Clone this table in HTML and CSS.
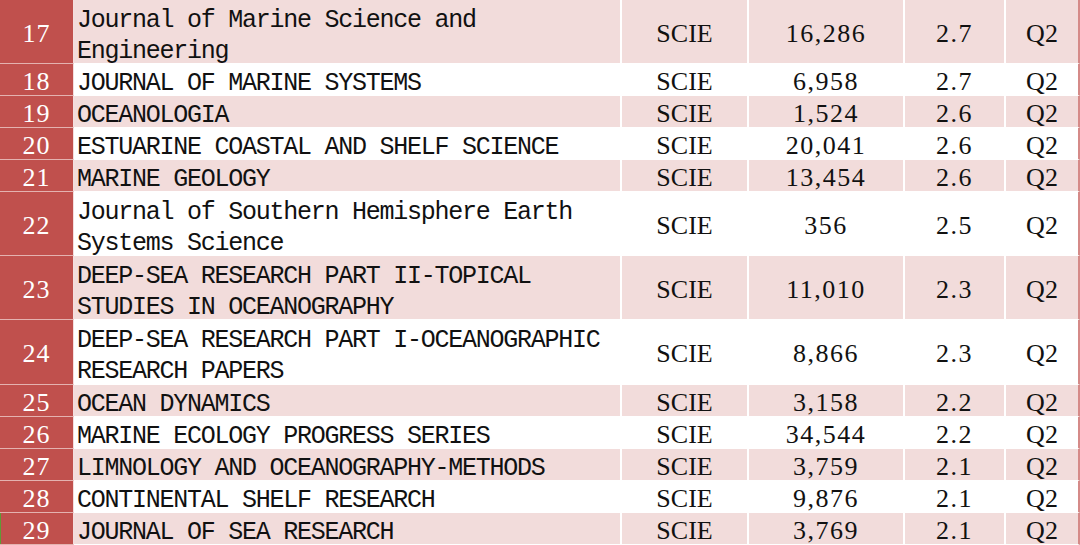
FILE: index.html
```html
<!DOCTYPE html>
<html>
<head>
<meta charset="utf-8">
<link rel="stylesheet" href="styles.css">
</head>
<body>
<div class="table">
  <div class="row pink tall first"><div class="no">17</div><div class="name">Journal of Marine Science and Engineering</div><div class="c idx">SCIE</div><div class="c num">16,286</div><div class="c if">2.7</div><div class="c q">Q2</div></div>
  <div class="row"><div class="no">18</div><div class="name">JOURNAL OF MARINE SYSTEMS</div><div class="c idx">SCIE</div><div class="c num">6,958</div><div class="c if">2.7</div><div class="c q">Q2</div></div>
  <div class="row pink"><div class="no">19</div><div class="name">OCEANOLOGIA</div><div class="c idx">SCIE</div><div class="c num">1,524</div><div class="c if">2.6</div><div class="c q">Q2</div></div>
  <div class="row"><div class="no">20</div><div class="name">ESTUARINE COASTAL AND SHELF SCIENCE</div><div class="c idx">SCIE</div><div class="c num">20,041</div><div class="c if">2.6</div><div class="c q">Q2</div></div>
  <div class="row pink"><div class="no">21</div><div class="name">MARINE GEOLOGY</div><div class="c idx">SCIE</div><div class="c num">13,454</div><div class="c if">2.6</div><div class="c q">Q2</div></div>
  <div class="row tall"><div class="no">22</div><div class="name">Journal of Southern Hemisphere Earth Systems Science</div><div class="c idx">SCIE</div><div class="c num">356</div><div class="c if">2.5</div><div class="c q">Q2</div></div>
  <div class="row pink tall"><div class="no">23</div><div class="name">DEEP-SEA RESEARCH PART II-TOPICAL STUDIES IN OCEANOGRAPHY</div><div class="c idx">SCIE</div><div class="c num">11,010</div><div class="c if">2.3</div><div class="c q">Q2</div></div>
  <div class="row tall extra"><div class="no">24</div><div class="name">DEEP-SEA RESEARCH PART I-OCEANOGRAPHIC RESEARCH PAPERS</div><div class="c idx">SCIE</div><div class="c num">8,866</div><div class="c if">2.3</div><div class="c q">Q2</div></div>
  <div class="row pink"><div class="no">25</div><div class="name">OCEAN DYNAMICS</div><div class="c idx">SCIE</div><div class="c num">3,158</div><div class="c if">2.2</div><div class="c q">Q2</div></div>
  <div class="row"><div class="no">26</div><div class="name">MARINE ECOLOGY PROGRESS SERIES</div><div class="c idx">SCIE</div><div class="c num">34,544</div><div class="c if">2.2</div><div class="c q">Q2</div></div>
  <div class="row pink"><div class="no">27</div><div class="name">LIMNOLOGY AND OCEANOGRAPHY-METHODS</div><div class="c idx">SCIE</div><div class="c num">3,759</div><div class="c if">2.1</div><div class="c q">Q2</div></div>
  <div class="row"><div class="no">28</div><div class="name">CONTINENTAL SHELF RESEARCH</div><div class="c idx">SCIE</div><div class="c num">9,876</div><div class="c if">2.1</div><div class="c q">Q2</div></div>
  <div class="row pink"><div class="no sel">29</div><div class="name">JOURNAL OF SEA RESEARCH</div><div class="c idx">SCIE</div><div class="c num">3,769</div><div class="c if">2.1</div><div class="c q">Q2</div></div>
</div>
</body>
</html>
```
FILE: styles.css
```css
html, body {
  margin: 0;
  padding: 0;
  background: #ffffff;
}
body {
  width: 1080px;
  height: 545px;
  overflow: hidden;
  font-family: "Liberation Mono", monospace;
  font-size: 25px;
  letter-spacing: -1.25px;
  color: #111111;
}
.table {
  display: flex;
  flex-direction: column;
}
.row {
  display: grid;
  grid-template-columns: 74px 548px 127px 156px 101px 74px;
  grid-template-rows: 100%;
  height: 32px;
  flex: none;
  background: #ffffff;
}
.row.tall { height: 64px; }
.row.extra { height: 65px; }
.row.pink { background: #f2dcdb; }
.row > div {
  display: flex;
  align-items: flex-start;
  box-sizing: border-box;
  min-height: 0;
  border-bottom: 1px solid #ffffff;
  line-height: 22px;
  padding-top: 9px;
}
.row.tall > div {
  padding-top: 25px;
}
.row.tall > .name {
  padding-top: 5px;
  line-height: 31px;
}
.row > .no,
.row > .c {
  font-family: "Liberation Serif", serif;
  font-size: 26px;
  letter-spacing: 0;
  padding-top: 7px;
}
.row.tall > .no,
.row.tall > .c {
  padding-top: 23px;
}
.row > .num,
.row > .if {
  letter-spacing: 1.5px;
}
.row > .no {
  letter-spacing: 1px;
}
.no {
  background: #c0504d;
  color: #ffffff;
  justify-content: center;
  border-right: 1px solid #f3dede;
  border-bottom-color: #e4b2b0 !important;
}
.no.sel { box-shadow: inset 1px 0 0 #5f9a36; }
.name {
  padding-left: 3px;
  padding-right: 8px;
  border-right: 2px solid #ffffff;
}
.c {
  justify-content: center;
  border-right: 2px solid #ffffff;
  white-space: nowrap;
}
.c.q {
  border-right: 2px solid #d58a88;
}
```
